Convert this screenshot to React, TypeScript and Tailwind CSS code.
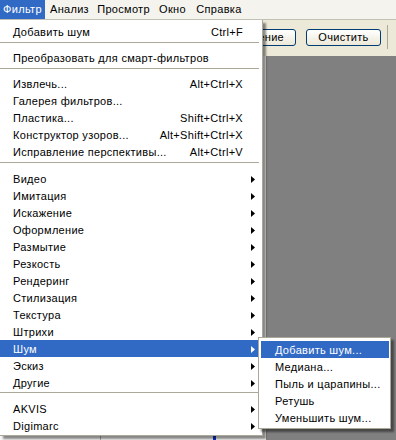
import React from 'react';

type Item =
  | { type: 'sep'; cls: string }
  | { type: 'item'; label: string; shortcut?: string; sub?: boolean; active?: boolean };

const items: Item[] = [
  { type: 'item', label: 'Добавить шум', shortcut: 'Ctrl+F' },
  { type: 'sep', cls: 'mt-[2px] mb-[6px]' },
  { type: 'item', label: 'Преобразовать для смарт-фильтров' },
  { type: 'sep', cls: 'mt-[2px] mb-[6px]' },
  { type: 'item', label: 'Извлечь...', shortcut: 'Alt+Ctrl+X' },
  { type: 'item', label: 'Галерея фильтров...' },
  { type: 'item', label: 'Пластика...', shortcut: 'Shift+Ctrl+X' },
  { type: 'item', label: 'Конструктор узоров...', shortcut: 'Alt+Shift+Ctrl+X' },
  { type: 'item', label: 'Исправление перспективы...', shortcut: 'Alt+Ctrl+V' },
  { type: 'sep', cls: 'mt-[2px] mb-[7px]' },
  { type: 'item', label: 'Видео', sub: true },
  { type: 'item', label: 'Имитация', sub: true },
  { type: 'item', label: 'Искажение', sub: true },
  { type: 'item', label: 'Оформление', sub: true },
  { type: 'item', label: 'Размытие', sub: true },
  { type: 'item', label: 'Резкость', sub: true },
  { type: 'item', label: 'Рендеринг', sub: true },
  { type: 'item', label: 'Стилизация', sub: true },
  { type: 'item', label: 'Текстура', sub: true },
  { type: 'item', label: 'Штрихи', sub: true },
  { type: 'item', label: 'Шум', sub: true, active: true },
  { type: 'item', label: 'Эскиз', sub: true },
  { type: 'item', label: 'Другие', sub: true },
  { type: 'sep', cls: 'mt-[1px] mb-[7px]' },
  { type: 'item', label: 'AKVIS', sub: true },
  { type: 'item', label: 'Digimarc', sub: true },
];

const noise = ['Добавить шум...', 'Медиана...', 'Пыль и царапины...', 'Ретушь', 'Уменьшить шум...'];

function Arrow({ white }: { white?: boolean }) {
  return (
    <svg width="4" height="7" viewBox="0 0 4 7" className="block">
      <path d="M0 0L4 3.5L0 7Z" fill={white ? '#fff' : '#000'} />
    </svg>
  );
}

export default function App() {
  return (
    <div className="relative w-[396px] h-[440px] overflow-hidden bg-white font-['Liberation_Sans',sans-serif] text-[11px] tracking-[0.3px] leading-none">
      {/* menu bar */}
      <div className="flex h-[20px] items-stretch bg-[#f4f3ee] border-b border-[#c2c0b5] text-black">
        <div className="flex w-[45px] items-center justify-center bg-[#316ac5] text-white">Фильтр</div>
        <div className="flex w-[49px] items-center justify-center">Анализ</div>
        <div className="flex w-[59px] items-center justify-center">Просмотр</div>
        <div className="flex w-[39px] items-center justify-center">Окно</div>
        <div className="flex w-[54px] items-center justify-center">Справка</div>
      </div>

      {/* toolbar */}
      <div className="flex h-[36px] items-center justify-end bg-[#ece9d8] pb-[2px]">
        <div className="flex h-[17px] w-[77px] items-center justify-end pr-[11px] rounded-[3px] border border-[#003c74] bg-gradient-to-b from-white to-[#ece9d8] text-black">
          ение
        </div>
        <div className="w-[10px]" />
        <div className="flex h-[17px] w-[75px] items-center justify-center rounded-[3px] border border-[#003c74] bg-gradient-to-b from-white to-[#ece9d8] text-black">
          Очистить
        </div>
        <div className="ml-[6px] mr-[8px] h-[24px] w-px bg-[#aca899]" />
      </div>

      {/* work area */}
      <div className="flex h-[384px]">
        <div className="relative w-[266px] bg-[#f7f7f5]">
          <div className="absolute left-[100px] top-0 h-full w-px bg-[#b0b0b0]" />
          <div className="absolute left-[213px] top-0 h-full w-[3px] bg-[#1030d0]" />
        </div>
        <div className="flex-1 bg-[#808080]" />
      </div>

      {/* Filter menu */}
      <div className="absolute left-0 top-[20px] w-[263px] bg-white border-r border-b border-[#aca899] pt-[3px] pb-px pr-[3px] shadow-[3px_3px_2px_rgba(0,0,0,0.45)] text-black">
        {items.map((it, i) =>
          it.type === 'sep' ? (
            <div key={i} className={`h-px bg-[#aca899] ${it.cls}`} />
          ) : (
            <div
              key={i}
              className={`flex h-[17px] items-center pt-px ${it.active ? 'bg-[#316ac5] text-white' : ''}`}
            >
              <span className="flex-1 pl-[13px] whitespace-nowrap">{it.label}</span>
              {it.shortcut && <span className="whitespace-nowrap">{it.shortcut}</span>}
              <span className="flex w-[16px] justify-end pr-[4px]">
                {it.sub && <Arrow white={it.active} />}
              </span>
            </div>
          )
        )}
      </div>

      {/* Noise submenu */}
      <div className="absolute left-[258px] top-[337px] w-[133px] bg-white border border-[#aca899] pt-[3px] pb-[2px] pl-[2px] pr-px shadow-[3px_3px_2px_rgba(0,0,0,0.45)] text-black">
        {noise.map((n, i) => (
          <div
            key={n}
            className={`flex h-[17px] items-center pt-px pl-[14px] whitespace-nowrap ${i === 0 ? 'bg-[#316ac5] text-white' : ''}`}
          >
            {n}
          </div>
        ))}
      </div>
    </div>
  );
}
